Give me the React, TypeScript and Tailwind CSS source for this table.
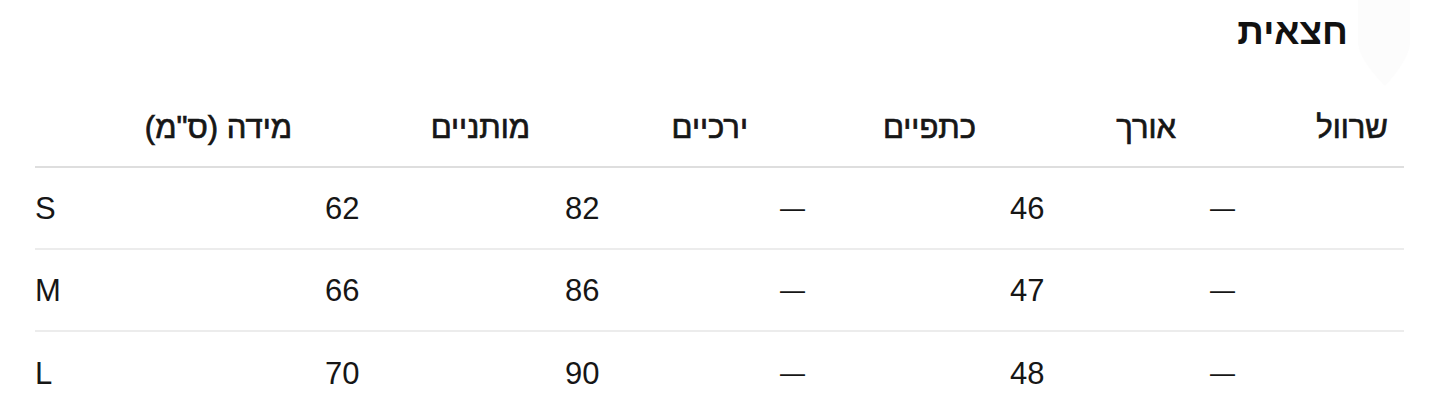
const headers = [
  { label: 'מידה (ס"מ)', pr: "pr-[33px]" },
  { label: "מותניים", pr: "pr-[35px]" },
  { label: "ירכיים", pr: "pr-[32px]" },
  { label: "כתפיים", pr: "pr-[34px]" },
  { label: "אורך", pr: "pr-[34px]" },
  { label: "שרוול", pr: "pr-[16px]" },
];

const rows = [
  ["S", "62", "82", "—", "46", "—"],
  ["M", "66", "86", "—", "47", "—"],
  ["L", "70", "90", "—", "48", "—"],
];

export default function App() {
  return (
    <div
      className="relative h-[417px] w-[1439px] overflow-hidden bg-white text-[#111]"
      style={{ fontFamily: '"Liberation Sans", Arial, sans-serif' }}
    >
      {/* faint ghost shape top right */}
      <svg className="absolute left-[1358px] top-0" width="52" height="88" viewBox="0 0 52 88">
        <path d="M0 0H52V42Q52 58 27 86Q0 58 0 42Z" fill="#fcfcfc" />
      </svg>

      <div className="relative">
        <h2
          dir="rtl"
          className="pr-[91px] pt-[9px] text-[37px] font-bold leading-[46px]"
        >
          חצאית
        </h2>

        <div className="ml-[35px] mt-[33px] w-[1369px]">
          <div className="grid h-[80px] grid-cols-[290px_240px_215px_230px_200px_194px] items-center border-b-2 border-[#dedede]">
            {headers.map((h) => (
              <div
                key={h.label}
                dir="rtl"
                className={`${h.pr} text-right text-[31px] leading-none text-[#161616] [-webkit-text-stroke:0.7px_#161616]`}
              >
                {h.label}
              </div>
            ))}
          </div>
          {rows.map((r, i) => (
            <div
              key={r[0]}
              className={`grid h-[82px] grid-cols-[290px_240px_215px_230px_200px_194px] items-center ${
                i < rows.length - 1 ? "border-b-2 border-[#ececec]" : ""
              }`}
            >
              {r.map((c, j) => (
                <div
                  key={j}
                  className={`text-left leading-none text-[#161616] ${
                    c === "—" ? "text-[25px]" : "text-[31px]"
                  }`}
                >
                  {c}
                </div>
              ))}
            </div>
          ))}
        </div>
      </div>
    </div>
  );
}
